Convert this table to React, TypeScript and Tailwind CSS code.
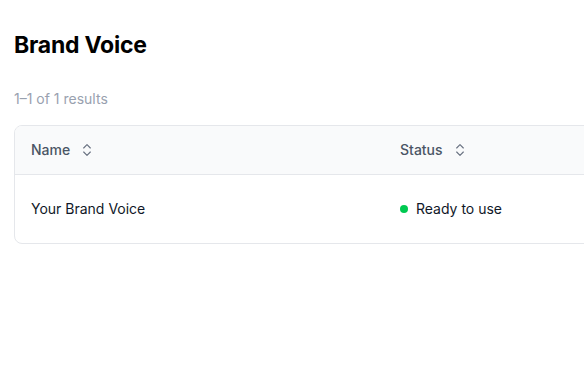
import React from "react";
import { ChevronsUpDown } from "lucide-react";

const App = () => {
  return (
    <div className="w-[584px] h-[381px] overflow-hidden bg-white font-['Inter',sans-serif] text-gray-900">
      <div className="pl-[14px] pt-[30px] w-[900px]">
        <h1 className="text-[23px] leading-[30px] font-bold tracking-[-0.01em] text-black">Brand Voice</h1>
        <p className="mt-[29px] text-sm leading-[20px] text-gray-400">1–1 of 1 results</p>
        <div className="mt-[16px] border border-gray-200 rounded-lg overflow-hidden">
          <div className="flex h-[49px] items-center bg-gray-50 border-b border-gray-200 text-sm font-medium text-gray-600">
            <div className="w-[385px] pl-[16px] flex items-center gap-[9px]">
              Name
              <ChevronsUpDown className="w-4 h-4 text-gray-500" strokeWidth={1.75} />
            </div>
            <div className="flex-1 flex items-center gap-[9px]">
              Status
              <ChevronsUpDown className="w-4 h-4 text-gray-500" strokeWidth={1.75} />
            </div>
          </div>
          <div className="flex h-[68px] items-center text-sm text-gray-900">
            <div className="w-[385px] pl-[16px]">Your Brand Voice</div>
            <div className="flex-1 flex items-center gap-2">
              <span className="w-2 h-2 rounded-full bg-green-500" />
              Ready to use
            </div>
          </div>
        </div>
      </div>
    </div>
  );
};

export default App;
